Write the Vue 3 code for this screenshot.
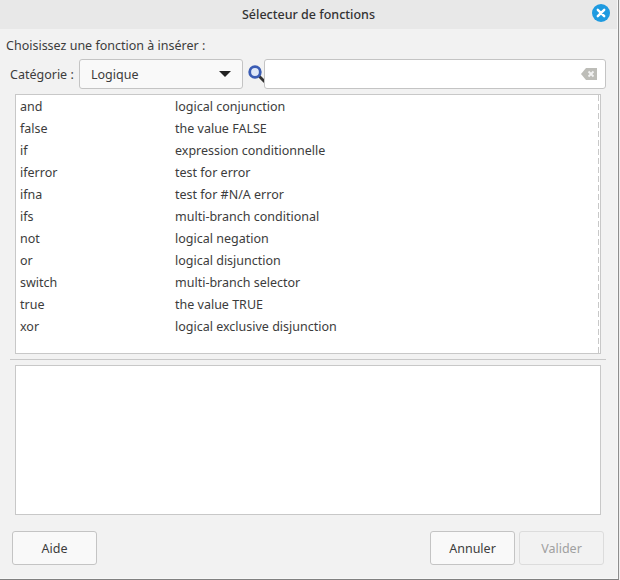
<template>
  <div class="backdrop">
    <div class="dialog">
      <header class="titlebar">
        <span class="title">Sélecteur de fonctions</span>
        <button class="close-btn" aria-label="Fermer">
          <svg width="18" height="18" viewBox="0 0 18 18">
            <circle cx="9" cy="9" r="9" fill="#1e9ae0" />
            <path d="M5.8 5.8l6.4 6.4M12.2 5.8l-6.4 6.4" stroke="#fff" stroke-width="2.4" stroke-linecap="round" />
          </svg>
        </button>
      </header>

      <div class="content">
        <div class="prompt">Choisissez une fonction à insérer :</div>

        <div class="filter-row">
          <label class="cat-label">Catégorie :</label>
          <div class="combo">
            <span>Logique</span>
            <span class="arrow"></span>
          </div>
          <svg class="loupe" width="18" height="18" viewBox="0 0 18 18">
            <path d="M11 11l5.4 5.4" stroke="#333" stroke-width="2.8" stroke-linecap="round" />
            <circle cx="7" cy="7" r="5.3" fill="#dfe8f8" stroke="#3a5cb4" stroke-width="2.8" />
          </svg>
          <div class="search">
            <svg width="16" height="12" viewBox="0 0 16 12">
              <path d="M0 6l5-6h11v12H5z" fill="#bdbdb8" />
              <path d="M7.5 3.5l5 5M12.5 3.5l-5 5" stroke="#f2f2f2" stroke-width="1.8" />
            </svg>
          </div>
        </div>

        <div class="fn-list">
          <div v-for="fn in functions" :key="fn.name" class="fn-row">
            <span class="fn-name">{{ fn.name }}</span>
            <span>{{ fn.desc }}</span>
          </div>
        </div>

        <div class="separator"></div>

        <div class="preview"></div>

        <footer class="buttons">
          <button class="btn">Aide</button>
          <div class="right-buttons">
            <button class="btn">Annuler</button>
            <button class="btn disabled" disabled>Valider</button>
          </div>
        </footer>
      </div>
    </div>
  </div>
</template>

<script setup>
const functions = [
  { name: 'and', desc: 'logical conjunction' },
  { name: 'false', desc: 'the value FALSE' },
  { name: 'if', desc: 'expression conditionnelle' },
  { name: 'iferror', desc: 'test for error' },
  { name: 'ifna', desc: 'test for #N/A error' },
  { name: 'ifs', desc: 'multi-branch conditional' },
  { name: 'not', desc: 'logical negation' },
  { name: 'or', desc: 'logical disjunction' },
  { name: 'switch', desc: 'multi-branch selector' },
  { name: 'true', desc: 'the value TRUE' },
  { name: 'xor', desc: 'logical exclusive disjunction' }
]
</script>

<style>
html,
body {
  margin: 0;
  background: #efefef;
}
</style>

<style scoped>
.backdrop {
  width: 619px;
  height: 580px;
  box-sizing: border-box;
  border-right: 1px solid #8e8e8e;
  border-bottom: 1px solid #808080;
  background: #f7f7f7;
  overflow: hidden;
}

.dialog {
  width: 617px;
  height: 578px;
  background: #f2f2f2;
  color: #3c3c3c;
  font-family: "Noto Sans", sans-serif;
  font-size: 12.5px;
}

.titlebar {
  height: 29px;
  display: flex;
  align-items: center;
  justify-content: center;
  position: relative;
  background: #e8e8e8;
}

.title {
  font-weight: 500;
  color: #333;
}

.close-btn {
  position: absolute;
  right: 7px;
  top: 4px;
  width: 18px;
  height: 18px;
  padding: 0;
  border: 0;
  background: none;
  display: flex;
}

.content {
  padding: 8px 10px 0 6px;
}

.prompt {
  height: 18px;
  line-height: 18px;
}

.filter-row {
  display: flex;
  align-items: center;
  height: 30px;
  margin-top: 4px;
}

.cat-label {
  width: 73px;
  padding-left: 4px;
  box-sizing: border-box;
}

.combo {
  width: 164px;
  height: 30px;
  box-sizing: border-box;
  border: 1px solid #c4c4c4;
  border-radius: 3px;
  background: #f9f9f9;
  padding: 0 11px;
  display: flex;
  align-items: center;
  justify-content: space-between;
}

.arrow {
  width: 0;
  height: 0;
  border-left: 6px solid transparent;
  border-right: 6px solid transparent;
  border-top: 6px solid #222;
}

.loupe {
  margin: 0 0 0 5px;
}

.search {
  width: 342px;
  height: 30px;
  margin-left: -2px;
  box-sizing: border-box;
  border: 1px solid #c4c4c4;
  border-radius: 3px;
  background: #fff;
  display: flex;
  align-items: center;
  justify-content: flex-end;
  padding-right: 8px;
}

.fn-list {
  width: 586px;
  height: 260px;
  margin: 5px 0 0 9px;
  box-sizing: border-box;
  border: 1px solid #c8c8c8;
  background: #fff;
  padding-top: 1px;
  position: relative;
}

.fn-list::after {
  content: "";
  position: absolute;
  top: 0;
  bottom: 0;
  right: 1px;
  width: 1px;
  background: repeating-linear-gradient(to bottom, #c8c8c8 0 6px, transparent 6px 9px);
}

.fn-row {
  display: flex;
  height: 22px;
  line-height: 22px;
  padding-left: 4px;
}

.fn-name {
  width: 155px;
}

.separator {
  width: 596px;
  height: 1px;
  margin: 5px 0 0 4px;
  background: #c8c8c8;
}

.preview {
  width: 586px;
  height: 150px;
  margin: 5px 0 0 9px;
  box-sizing: border-box;
  border: 1px solid #c8c8c8;
  background: #fff;
}

.buttons {
  display: flex;
  justify-content: space-between;
  width: 592px;
  margin: 16px 0 0 6px;
}

.right-buttons {
  display: flex;
  gap: 4px;
}

.btn {
  width: 85px;
  height: 34px;
  box-sizing: border-box;
  border: 1px solid #c4c4c4;
  border-radius: 3px;
  background: #f9f9f9;
  color: #3c3c3c;
  font: inherit;
  padding: 0;
}

.btn.disabled {
  border-color: #dcdcdc;
  background: #f2f2f2;
  color: #a0a0a0;
}
</style>
